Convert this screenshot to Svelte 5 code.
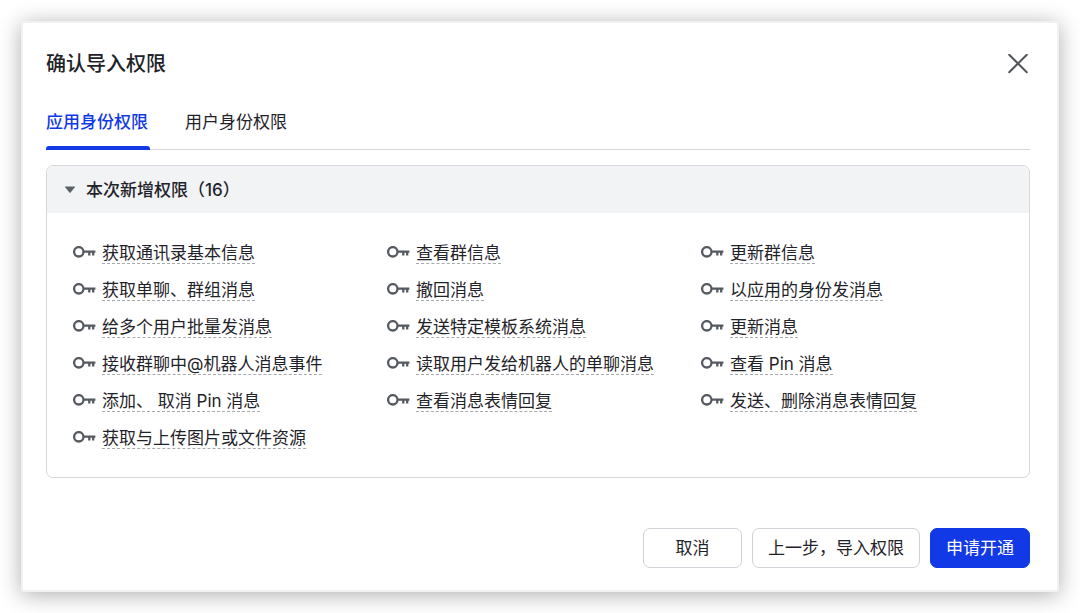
<script>
	const tabs = [
		{ id: "app", label: "应用身份权限" },
		{ id: "user", label: "用户身份权限" },
	];

	// listed row by row, three to a row
	const scopes = [
		"获取通讯录基本信息",
		"查看群信息",
		"更新群信息",
		"获取单聊、群组消息",
		"撤回消息",
		"以应用的身份发消息",
		"给多个用户批量发消息",
		"发送特定模板系统消息",
		"更新消息",
		"接收群聊中@机器人消息事件",
		"读取用户发给机器人的单聊消息",
		"查看 Pin 消息",
		"添加、 取消 Pin 消息",
		"查看消息表情回复",
		"发送、删除消息表情回复",
		"获取与上传图片或文件资源",
	];

	let activeTab = $state("app");
	let expanded = $state(true);
</script>

<div class="dialog" role="dialog" aria-labelledby="dialog-title">
	<header>
		<h1 id="dialog-title">确认导入权限</h1>
		<button class="close" type="button" aria-label="关闭">
			<svg width="20" height="20" viewBox="0 0 20 20">
				<path d="M1.2 .7l17.6 17.6M18.8 .7L1.2 18.3" />
			</svg>
		</button>
	</header>

	<div class="tabs" role="tablist">
		{#each tabs as tab (tab.id)}
			<button
				type="button"
				role="tab"
				class:active={tab.id === activeTab}
				aria-selected={tab.id === activeTab}
				onclick={() => (activeTab = tab.id)}
			>{tab.label}</button>
		{/each}
	</div>

	<section class="panel">
		<button
			class="panel-head"
			class:collapsed={!expanded}
			type="button"
			aria-expanded={expanded}
			onclick={() => (expanded = !expanded)}
		>
			<svg width="12" height="8" viewBox="0 0 12 8">
				<path d="M1.6 .5h8.8q.9 0 .4.8L6.6 6.6q-.6.7-1.2 0L1.2 1.3Q.7.5 1.6.5z" />
			</svg>
			本次新增权限（{scopes.length}）
		</button>
		{#if expanded}
			<ul>
				{#each scopes as scope}
					<li>
						<svg class="key" width="23" height="16" viewBox="0 0 23 16">
							<circle cx="5.8" cy="5.8" r="4.7" />
							<path d="M10.5 5.6H22.4M16.3 5.6V9.6M20.2 5.6V9.4" />
						</svg>
						<span>{scope}</span>
					</li>
				{/each}
			</ul>
		{/if}
	</section>

	<footer>
		<button type="button">取消</button>
		<button type="button">上一步，导入权限</button>
		<button class="primary" type="button">申请开通</button>
	</footer>
</div>

<style>
	:global(body) {
		margin: 0;
		background: #fff;
	}

	.dialog {
		margin: 21px;
		padding: 25px 27px 22px 23px;
		border: 2px solid #f1f1f1;
		border-radius: 3px;
		background: #fff;
		box-shadow: 0 3px 22px rgba(0, 0, 0, 0.32);
		font-family: Inter, "Noto Sans CJK SC", sans-serif;
		font-size: 17px;
		line-height: 24px;
		color: #1f2329;
	}

	button {
		margin: 0;
		padding: 0;
		border: none;
		background: transparent;
		font: inherit;
		color: inherit;
		cursor: pointer;
	}

	header {
		display: flex;
		align-items: center;
		justify-content: space-between;
		height: 32px;
	}

	h1 {
		margin: 0;
		font-size: 20px;
		font-weight: 500;
	}

	.close {
		display: flex;
		padding: 2px;
	}

	.close path {
		fill: none;
		stroke: #51565d;
		stroke-width: 2;
		stroke-linecap: round;
	}

	.tabs {
		display: flex;
		gap: 35px;
		margin-top: 30px;
		box-shadow: inset 0 -1px #d5d7da;
	}

	.tabs button {
		min-width: 104px;
		padding-bottom: 12px;
		border-bottom: 4px solid transparent;
		text-align: left;
	}

	.tabs .active {
		position: relative;
		color: #1239e6;
		font-weight: 500;
	}

	.tabs .active::after {
		content: "";
		position: absolute;
		left: 0;
		right: 0;
		bottom: -4px;
		height: 4px;
		border-radius: 3px 3px 0 0;
		background: #1239e6;
	}

	.panel {
		margin-top: 15px;
		border: 1px solid #d5d7da;
		border-radius: 7px;
		overflow: hidden;
	}

	.panel-head {
		display: flex;
		align-items: center;
		gap: 10px;
		width: 100%;
		padding: 12px 17px 11px;
		background: #f1f3f5;
		font-weight: 500;
		text-align: left;
	}

	.panel-head path {
		fill: #5c6168;
	}

	.collapsed svg {
		transform: rotate(-90deg);
	}

	ul {
		display: grid;
		grid-template-columns: repeat(3, 1fr);
		column-gap: 12px;
		margin: 0;
		padding: 22px 26px 20px;
		list-style: none;
	}

	li {
		display: flex;
		align-items: center;
		gap: 6px;
		height: 37px;
		white-space: nowrap;
	}

	li span {
		line-height: 20px;
		border-bottom: 1px dashed #a6a9ae;
	}

	.key {
		flex: none;
		fill: none;
		stroke: #555a61;
		stroke-width: 2.3;
	}

	footer {
		display: flex;
		justify-content: flex-end;
		gap: 10px;
		margin-top: 50px;
	}

	footer button {
		min-width: 99px;
		height: 40px;
		padding: 0 15px;
		border: 1px solid #cfd2d6;
		border-radius: 7px;
	}

	footer .primary {
		border-color: #1239e6;
		background: #1239e6;
		color: #fff;
	}
</style>
